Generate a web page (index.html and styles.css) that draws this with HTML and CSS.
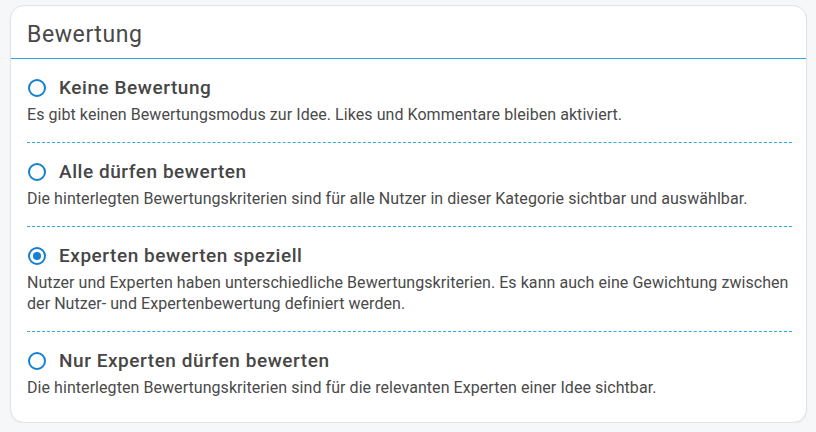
FILE: index.html
```html
<!DOCTYPE html>
<html lang="de">
<head>
<meta charset="utf-8">
<title>Bewertung</title>
<link rel="stylesheet" href="styles.css">
</head>
<body>
<section class="card">
  <header class="card-header">Bewertung</header>
  <ul class="options">
    <li class="option">
      <div class="option-title"><span class="radio"></span>Keine Bewertung</div>
      <p class="option-desc">Es gibt keinen Bewertungsmodus zur Idee. Likes und Kommentare bleiben aktiviert.</p>
    </li>
    <li class="option">
      <div class="option-title"><span class="radio"></span>Alle dürfen bewerten</div>
      <p class="option-desc">Die hinterlegten Bewertungskriterien sind für alle Nutzer in dieser Kategorie sichtbar und auswählbar.</p>
    </li>
    <li class="option">
      <div class="option-title"><span class="radio checked"></span>Experten bewerten speziell</div>
      <p class="option-desc">Nutzer und Experten haben unterschiedliche Bewertungskriterien. Es kann auch eine Gewichtung zwischen der Nutzer- und Expertenbewertung definiert werden.</p>
    </li>
    <li class="option">
      <div class="option-title"><span class="radio"></span>Nur Experten dürfen bewerten</div>
      <p class="option-desc">Die hinterlegten Bewertungskriterien sind für die relevanten Experten einer Idee sichtbar.</p>
    </li>
  </ul>
</section>
</body>
</html>
```
FILE: styles.css
```css
html, body {
  margin: 0;
  padding: 0;
}
body {
  background: #f6f7f9;
  font-family: Roboto, "Liberation Sans", Arial, sans-serif;
  color: #454545;
  padding: 5px 9px 0 10px;
}
.card {
  background: #fff;
  border: 1px solid #e2e3e5;
  border-radius: 14px;
  box-shadow: 0 1px 2px rgba(0, 0, 0, 0.06);
  height: 416px;
  box-sizing: content-box;
}
.card-header {
  height: 53px;
  box-sizing: border-box;
  padding: 15px 16px 0;
  font-size: 23px;
  line-height: 28px;
  font-weight: 400;
  color: #484848;
  border-bottom: 1px solid #2aa8e2;
  letter-spacing: 0.6px;
}
.options {
  list-style: none;
  margin: 0;
  padding: 0 14px 0 16px;
}
.option {
  padding: 17px 0 17px;
  border-bottom: 1px dashed #2fa9e0;
}
.option:last-child {
  border-bottom: none;
}
.option-title {
  display: flex;
  align-items: center;
  gap: 13px;
  font-size: 19px;
  line-height: 24px;
  font-weight: 500;
  color: #464646;
  letter-spacing: 0.55px;
}
.radio {
  width: 18px;
  height: 18px;
  box-sizing: border-box;
  border: 2px solid #1580d0;
  border-radius: 50%;
  margin-left: 1px;
  flex: none;
  display: flex;
  align-items: center;
  justify-content: center;
}
.radio.checked::after {
  content: "";
  width: 8px;
  height: 8px;
  border-radius: 50%;
  background: #1580d0;
}
.option-desc {
  margin: 4px 0 0;
  font-size: 16px;
  line-height: 21px;
  color: #4a4a4a;
  letter-spacing: 0.06px;
}
```
